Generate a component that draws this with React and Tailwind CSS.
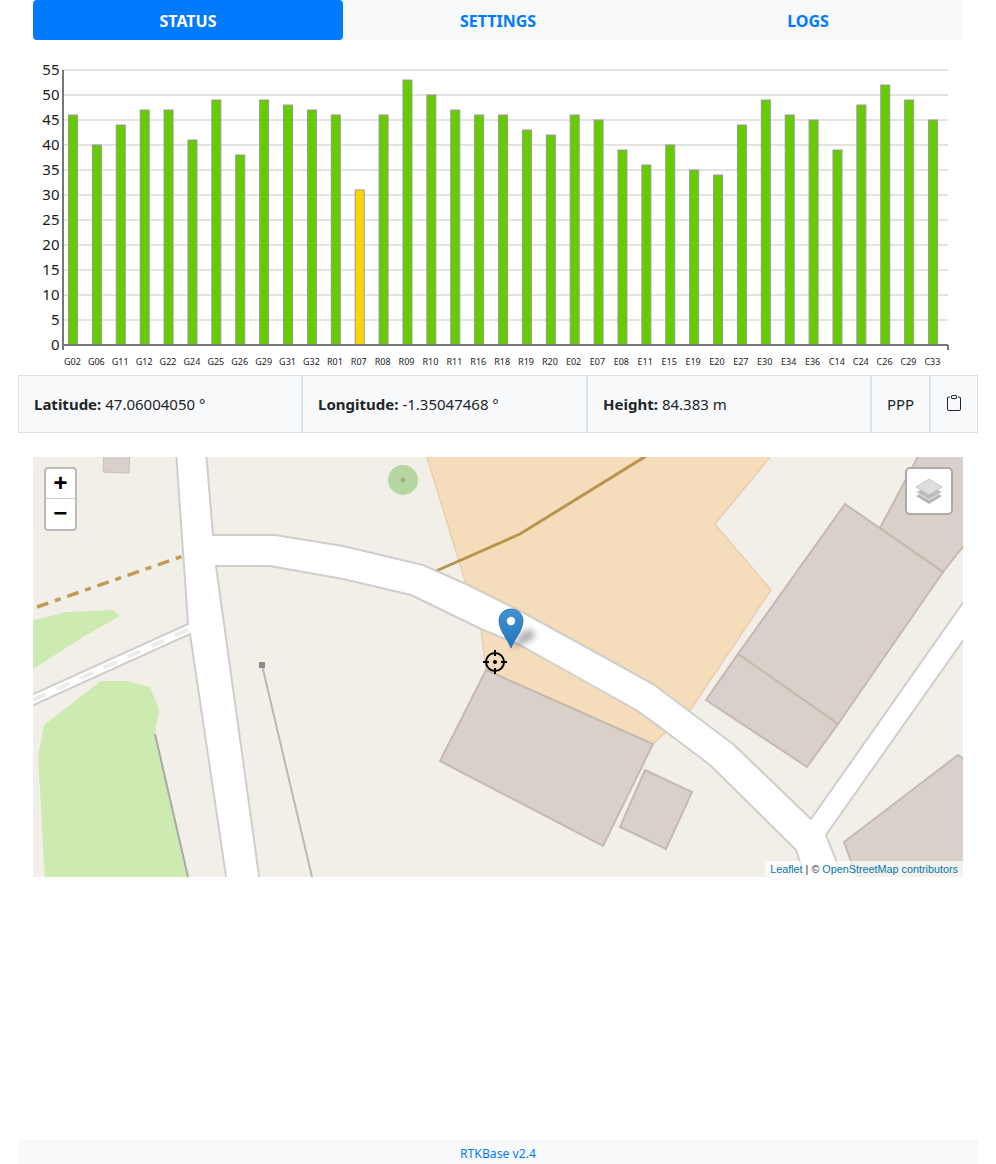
const sats = [
  ['G02', 46], ['G06', 40], ['G11', 44], ['G12', 47], ['G22', 47], ['G24', 41], ['G25', 49], ['G26', 38],
  ['G29', 49], ['G31', 48], ['G32', 47], ['R01', 46], ['R07', 31], ['R08', 46], ['R09', 53], ['R10', 50],
  ['R11', 47], ['R16', 46], ['R18', 46], ['R19', 43], ['R20', 42], ['E02', 46], ['E07', 45], ['E08', 39],
  ['E11', 36], ['E15', 40], ['E19', 35], ['E20', 34], ['E27', 44], ['E30', 49], ['E34', 46], ['E36', 45],
  ['C14', 39], ['C24', 48], ['C26', 52], ['C29', 49], ['C33', 45],
];

const ticks = [0, 5, 10, 15, 20, 25, 30, 35, 40, 45, 50, 55];
const font = { fontFamily: '"Noto Sans", sans-serif' };

// chart svg starts at y=40 of the page
const SatChart = () => (
  <svg width="996" height="335" className="block" style={font}>
    {ticks.map((t) => {
      const y = 305 - t * 5;
      return (
        <g key={t}>
          {t > 0 && <line x1="63" x2="948" y1={y} y2={y} stroke="#e3e3e3" strokeWidth="2" />}
          <text x="59.5" y={y + 5} textAnchor="end" fontSize="15" fill="#1a1a1a">{t}</text>
        </g>
      );
    })}
    {sats.map(([name, v], i) => {
      const x = 68 + i * 23.89;
      return (
        <g key={name}>
          <rect x={x + 0.5} y={305 - v * 5} width="9" height={v * 5} fill={v < 34 ? '#ffd600' : '#66cc00'} stroke="#999" strokeWidth="1" />
          <text x={64 + i * 23.9} y="325" fontSize="9" fill="#1a1a1a">{name}</text>
        </g>
      );
    })}
    <path d="M63 30V310M63 305H948M948 305V310" stroke="#777" strokeWidth="2" fill="none" />
  </svg>
);

const roadPts =
  '143,-6 173,-6 180,78 242,78 310,89 390,108 433,127 493,157 620,227 700,287 778,362 936,137 936,175 793,378 812,426 774,426 763,393 677,308 620,265 603,253 487,188 448,172 378,138 310,122 237,109 183,109 227,426 194,426 157,177 -6,251 -6,240 155,167';

const MapTile = () => (
  <svg width="930" height="420" className="block">
    <defs>
      <filter id="soft" x="-2%" y="-2%" width="104%" height="104%">
        <feGaussianBlur stdDeviation="0.6" />
      </filter>
    </defs>
    <g filter="url(#soft)">
      <rect x="-6" y="-6" width="942" height="432" fill="#f2efe9" />
      <polygon points="392,-6 433,127 448,172 453,213 620,287 658,252 738,133 682,67 742,-6" fill="#f5dcba" stroke="#e8cfae" strokeWidth="1.5" />
      <path d="M403 114L487 77L618 -4" fill="none" stroke="#b8954f" strokeWidth="3" />
      <polygon points="-6,165 33,155 80,153 87,159 50,180 -6,216" fill="#cdebb0" />
      <polygon points="11,268 68,224 93,224 117,230 126,252 122,277 156,426 12,426 7,333 5,300" fill="#cdebb0" />
      <path d="M122 277L155 420" fill="none" stroke="#a9a9a9" strokeWidth="2" />
      <path d="M4 150L150 99" fill="none" stroke="#c09b56" strokeWidth="3.5" strokeDasharray="12 7 6 7" />
      <circle cx="370" cy="23" r="15" fill="#b5d6a0" />
      <circle cx="370" cy="23" r="2.5" fill="#8fb884" />
      <polygon points="71,-6 97,-6 96,16 70,15" fill="#d9d0c9" stroke="#cbbfb5" />
      <polygon points="888,-6 936,-6 936,82 910,115 847,71" fill="#d9d0c9" stroke="#c6b9ae" strokeWidth="2" />
      <polygon points="812,47 910,115 805,267 705,197" fill="#d9d0c9" stroke="#c6b9ae" strokeWidth="2" />
      <polygon points="705,197 805,267 774,310 673,243" fill="#d9d0c9" stroke="#c6b9ae" strokeWidth="2" />
      <polygon points="453,213 620,287 570,389 407,304" fill="#d9d0c9" stroke="#c6b9ae" strokeWidth="2" />
      <polygon points="612,313 659,335 633,392 587,370" fill="#d9d0c9" stroke="#c6b9ae" strokeWidth="2" />
      <polygon points="925,298 936,306 936,426 826,426 811,385" fill="#d9d0c9" stroke="#c6b9ae" strokeWidth="2" />
      <polygon points={roadPts} fill="#fff" stroke="#d0cecb" strokeWidth="2" strokeLinejoin="round" />
      <path d="M0 243L156 172" fill="none" stroke="#ececec" strokeWidth="4" strokeDasharray="14 12" />
      <path d="M229 208L279 420" fill="none" stroke="#b8b8b4" strokeWidth="2" />
      <rect x="226" y="205" width="6" height="6" fill="#8a8a8a" />
    </g>
  </svg>
);

const LayersIcon = () => (
  <svg width="28" height="28" viewBox="0 0 28 28">
    <path d="M1 19L14 12L27 19L14 27Z" fill="#b4b4b4" />
    <path d="M1 15L14 8L27 15L14 23Z" fill="#bdbdbd" stroke="#f2f2f2" strokeWidth="0.8" />
    <path d="M1 10L14 2L27 10L14 18Z" fill="#dedede" stroke="#b8b8b8" strokeWidth="0.8" />
  </svg>
);

const Marker = () => (
  <svg width="50" height="42" viewBox="0 0 50 42" className="overflow-visible">
    <defs>
      <linearGradient id="pin" x1="0" y1="0" x2="0" y2="1">
        <stop offset="0" stopColor="#4393cf" />
        <stop offset="1" stopColor="#2273bd" />
      </linearGradient>
      <filter id="shadow" x="-50%" y="-50%" width="200%" height="200%">
        <feGaussianBlur stdDeviation="3" />
      </filter>
    </defs>
    <path d="M13 40L24 24C30 19 37 22 37 27C37 32 26 36 13 40Z" fill="#000" opacity="0.3" filter="url(#shadow)" />
    <path d="M13 40C10 32 1 22 1 13C1 6 6 1 13 1C20 1 25 6 25 13C25 22 16 32 13 40Z" fill="url(#pin)" stroke="#2a6fa8" strokeWidth="0.8" />
    <circle cx="13" cy="13" r="4.2" fill="#fff" />
  </svg>
);

const Crosshair = () => (
  <svg width="24" height="24" viewBox="0 0 24 24" fill="none" stroke="#000" strokeWidth="2">
    <circle cx="12" cy="12" r="9" />
    <path d="M12 0V6M12 18V24M0 12H6M18 12H24" />
    <circle cx="12" cy="12" r="2" fill="#000" stroke="none" />
  </svg>
);

const ClipboardIcon = () => (
  <svg width="16" height="16" viewBox="0 0 16 16" fill="currentColor">
    <path d="M4 1.5H3a2 2 0 0 0-2 2V14a2 2 0 0 0 2 2h10a2 2 0 0 0 2-2V3.5a2 2 0 0 0-2-2h-1v1h1a1 1 0 0 1 1 1V14a1 1 0 0 1-1 1H3a1 1 0 0 1-1-1V3.5a1 1 0 0 1 1-1h1v-1z" />
    <path d="M9.5 1a.5.5 0 0 1 .5.5v1a.5.5 0 0 1-.5.5h-3a.5.5 0 0 1-.5-.5v-1a.5.5 0 0 1 .5-.5h3zm-3-1A1.5 1.5 0 0 0 5 1.5v1A1.5 1.5 0 0 0 6.5 4h3A1.5 1.5 0 0 0 11 2.5v-1A1.5 1.5 0 0 0 9.5 0h-3z" />
  </svg>
);

const Cell = ({ label, value, className }) => (
  <div className={`flex items-center pl-[15px] pt-px border border-[#dee2e6] bg-[#f8f9fa] ${className}`}>
    <span className="font-bold mr-1">{label}</span>
    <span>{value}</span>
  </div>
);

const App = () => {
  return (
    <div className="min-h-[1164px] flex flex-col text-[#212529] text-[15px] font-['Noto_Sans',sans-serif]">
      <nav className="mx-[33px] h-10 grid grid-cols-3 bg-[#f8f9fa] font-bold text-base text-[#007bff]">
        <a className="flex items-center justify-center pt-px rounded bg-[#007bff] text-white">STATUS</a>
        <a className="flex items-center justify-center pt-px">SETTINGS</a>
        <a className="flex items-center justify-center pt-px">LOGS</a>
      </nav>

      <SatChart />

      <div className="mx-[18px] h-[58px] flex">
        <Cell label="Latitude:" value="47.06004050 °" className="w-[284px]" />
        <Cell label="Longitude:" value="-1.35047468 °" className="w-[285px]" />
        <Cell label="Height:" value="84.383 m" className="w-[284px]" />
        <div className="w-[59px] pt-px flex items-center justify-center border border-[#dee2e6] bg-[#f8f9fa]">PPP</div>
        <div className="w-[48px] flex items-center justify-center border border-[#dee2e6] bg-[#f8f9fa] pb-[2px]">
          <ClipboardIcon />
        </div>
      </div>

      <div className="relative mx-[33px] mt-6 h-[420px] overflow-hidden">
        <MapTile />
        <div className="absolute left-[11px] top-[10px] w-[33px] rounded border-2 border-[#bdbbb7] bg-white text-black font-['Liberation_Mono',monospace] font-bold text-[24px]">
          <div className="h-[30px] flex items-center justify-center border-b border-[#ccc] pt-[2px]">+</div>
          <div className="h-[30px] flex items-center justify-center pt-[2px]">−</div>
        </div>
        <div className="absolute right-[10px] top-[10px] w-[48px] h-[48px] rounded-[5px] border-2 border-[#b0aaa6] bg-white flex items-center justify-center">
          <LayersIcon />
        </div>
        <div className="absolute left-[465px] top-[151px]">
          <Marker />
        </div>
        <div className="absolute left-[450px] top-[193px]">
          <Crosshair />
        </div>
        <div className="absolute right-0 bottom-0 px-[5px] h-4 leading-4 bg-white/70 text-[10.8px] text-[#333] font-['Liberation_Sans',sans-serif]">
          <span className="text-[#0078a8]">Leaflet</span> | © <span className="text-[#0078a8]">OpenStreetMap contributors</span>
        </div>
      </div>

      <footer className="mt-auto mx-[18px] h-6 flex items-center justify-center bg-[#f8f9fa] pt-[5px] text-[12.2px] text-[#007bff]">
        RTKBase v2.4
      </footer>
    </div>
  );
};

export default App;
